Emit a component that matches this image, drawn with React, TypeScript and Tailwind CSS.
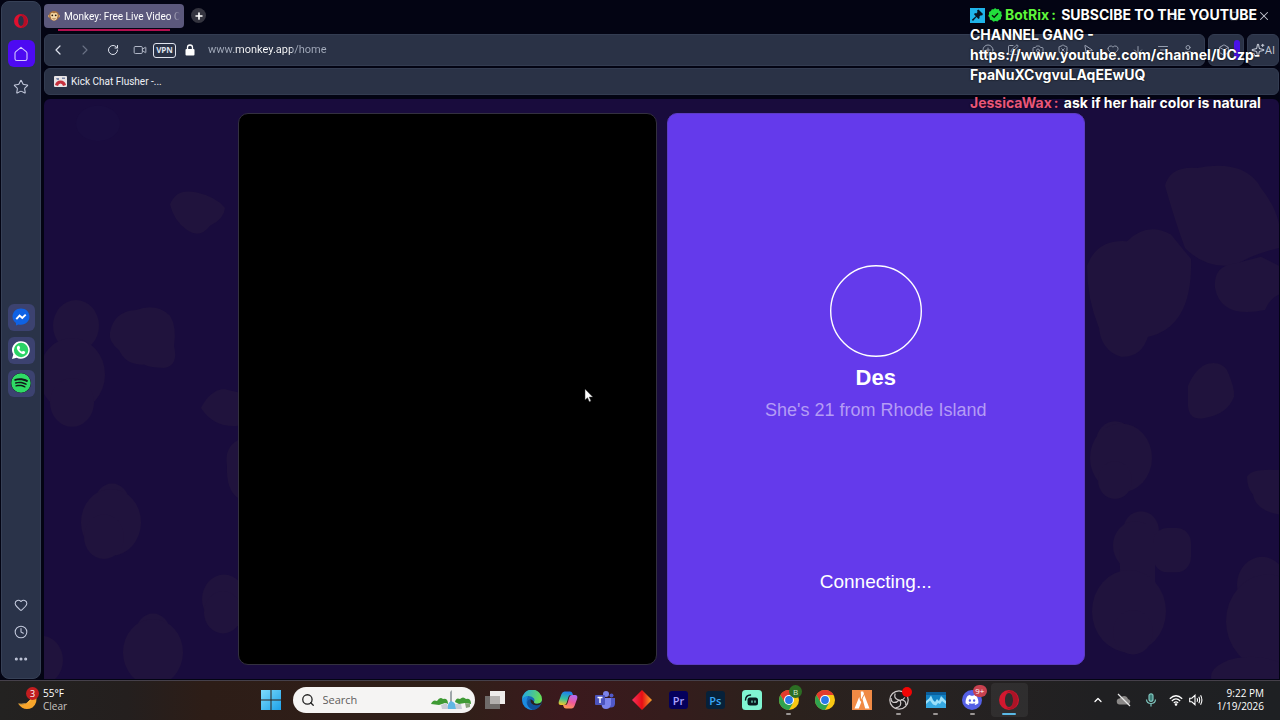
import { useState } from "react"
import type { ReactNode } from "react"
import {
  ArrowDown,
  Box,
  Camera,
  ChevronLeft,
  ChevronRight,
  ChevronUp,
  CirclePlus,
  Clock,
  Ellipsis,
  Heart,
  Minus,
  MousePointer2,
  Plus,
  RotateCw,
  Search,
  ShieldX,
  Sparkles,
  Square,
  SquarePen,
  Star,
  TextAlignCenter,
  User,
  Video,
  X,
} from "lucide-react"
import { FaDiscord, FaSpotify } from "react-icons/fa"

function OperaRing(props: { className: string }) {
  return (
    <svg viewBox="0 0 20 20" className={props.className} aria-hidden="true">
      <path fillRule="evenodd" fill="currentColor" d="M10 0a10 10 0 1 0 0 20a10 10 0 0 0 0-20zM10 3c2.600 0 4 3 4 7s-1.400 7-4 7s-4-3-4-7s1.400-7 4-7z" />
      <path fill="#7d0d1c" opacity=".45" d="M12 .5A10 10 0 0 1 12 19.500Q9 20 7 16.500Q9 18.500 11.500 17.500Q14 15 14 10T11.500 2.500Q9 1.500 7 3.500Q9 0 12 .5z" />
    </svg>
  )
}

function SideButton(props: { label: string; box?: string; short?: boolean; children: ReactNode }) {
  return (
    <div className={`flex items-center justify-center ${props.short ? "h-[27px]" : "h-[33px]"}`}>
      <button aria-label={props.label} className={`flex size-[27px] items-center justify-center rounded-md ${props.box ?? ""}`}>
        {props.children}
      </button>
    </div>
  )
}

function Sidebar() {
  return (
    <nav className="flex w-10 shrink-0 flex-col justify-between rounded-lg border border-[#364056] bg-[#2a3349] pt-0.5 pb-1.5 text-[#c3c9dc]">
      <div>
        <SideButton label="Opera menu">
          <OperaRing className="size-3.5 text-[#e0102f]" />
        </SideButton>
        <SideButton label="Home" box="bg-[#4d0af2]">
          <svg viewBox="0 0 16 16" className="size-4" fill="none" stroke="#d3c8ff" strokeWidth="1.100" strokeLinejoin="round">
            <path d="M8 1.300L13.200 5.600Q14 6.300 14 7.300V12.700Q14 14.500 12.200 14.500H3.800Q2 14.500 2 12.700V7.300Q2 6.300 2.800 5.600Z" />
          </svg>
        </SideButton>
        <SideButton label="Speed dial">
          <Star className="size-4" strokeWidth={1.6} />
        </SideButton>
      </div>
      <div className="pt-1.5">
        <SideButton label="Messenger" box="bg-[#3c4270]">
          <svg viewBox="0 0 20 20" className="size-5">
            <path fill="#0f62e4" d="M10 1.500c4.900 0 8.500 3.500 8.500 8.100s-3.600 8.100-8.500 8.100c-.9 0-1.700-.1-2.500-.3L5 18.500v-2.400C2.900 14.600 1.500 12.300 1.500 9.600C1.500 5 5.100 1.500 10 1.500z" />
            <path fill="none" stroke="#fff" strokeWidth="1.900" d="M5.300 12.200L8.600 8.500L11.300 10.900L14.700 7.600" />
          </svg>
        </SideButton>
        <SideButton label="WhatsApp" box="bg-[#3c4270]">
          <svg viewBox="0 0 20 20" className="size-5">
            <path fill="#fff" d="M10 1.200a8.800 8.800 0 1 1-4.300 16.500L1 19l1.300-4.500A8.800 8.800 0 0 1 10 1.200z" />
            <circle cx="10.100" cy="10" r="7.200" fill="#2bd366" />
            <path fill="#fff" d="M7 5.700l1.200.1l1 2.200l-.9 1.200q.9 1.800 2.700 2.600l1-1.100l2.300 1.100q.1 2.300-2.300 2.500Q9.500 14.200 7.200 11Q4.600 7.600 7 5.700z" />
          </svg>
        </SideButton>
        <SideButton label="Spotify" box="bg-[#3c4270]">
          <FaSpotify className="size-5 rounded-full bg-[#101a18] text-[#2fdb66]" />
        </SideButton>
      </div>
      <div>
        <SideButton label="Pinboards" short>
          <Heart className="size-3.5" strokeWidth={1.8} />
        </SideButton>
        <SideButton label="History" short>
          <Clock className="size-3.5" strokeWidth={1.8} />
        </SideButton>
        <SideButton label="More" short>
          <Ellipsis className="size-4" strokeWidth={2.6} />
        </SideButton>
      </div>
    </nav>
  )
}

function MonkeyFace() {
  return (
    <svg viewBox="0 0 12 12" className="size-3 shrink-0" aria-hidden="true">
      <circle cx="1.600" cy="6" r="1.600" fill="#d9a566" />
      <circle cx="10.400" cy="6" r="1.600" fill="#d9a566" />
      <circle cx="6" cy="5.800" r="4.900" fill="#a9713b" />
      <path fill="#f5d9a6" d="M6 3.400Q8 1.900 9.400 4Q10.200 6 9 7.500Q9 10.300 6 10.400Q3 10.300 3 7.500Q1.800 6 2.600 4Q4 1.900 6 3.400z" />
      <circle cx="4.300" cy="5.300" r=".9" fill="#2c1a10" />
      <circle cx="7.700" cy="5.300" r=".9" fill="#2c1a10" />
      <path d="M4.500 8.500Q6 9.600 7.500 8.500" stroke="#7a4526" strokeWidth=".7" fill="none" />
    </svg>
  )
}

function TabStrip() {
  return (
    <header className="flex h-[30px] items-start justify-between">
      <div className="flex items-start gap-[7px]">
        <div className="w-[140px]" role="tablist">
          <button role="tab" aria-selected="true" className="flex h-6 w-full items-center gap-1 rounded bg-[#5b587c] px-1 font-['Roboto',sans-serif] text-[10px] text-white">
            <MonkeyFace />
            <span className="whitespace-nowrap [mask-image:linear-gradient(90deg,#000_90%,transparent)]">Monkey: Free Live Video C</span>
          </button>
          <div className="mx-3.5 mt-px h-0.5 bg-[#b3104f]" />
        </div>
        <button aria-label="New tab" className="mt-1 flex size-[15px] items-center justify-center rounded-full bg-[#34343f] text-white">
          <Plus className="size-2.5" strokeWidth={4} />
        </button>
      </div>
      <div className="flex h-6 items-center text-[#8b8fa0]">
        <button aria-label="Search tabs" className="flex w-[30px] justify-center"><Search className="size-2.5" /></button>
        <button aria-label="Minimize" className="flex w-[30px] justify-center"><Minus className="size-3" strokeWidth={1.5} /></button>
        <button aria-label="Maximize" className="flex w-[30px] justify-center"><Square className="size-2.5" strokeWidth={2} /></button>
        <button aria-label="Close" className="flex w-[30px] justify-center text-[#c2c5cf]"><X className="size-3.5" strokeWidth={1.8} /></button>
      </div>
    </header>
  )
}

const TOOLS = [
  { label: "Zoom", Icon: CirclePlus },
  { label: "Edit page", Icon: SquarePen },
  { label: "Snapshot", Icon: Camera },
  { label: "Ad blocker", Icon: ShieldX },
  { label: "Send", Icon: MousePointer2 },
  { label: "Favourite", Icon: Heart },
  { label: "Downloads", Icon: ArrowDown },
  { label: "Easy setup", Icon: TextAlignCenter },
  { label: "Profile", Icon: User },
]

function AddressBar() {
  const [url, setUrl] = useState("www.monkey.app/home")

  return (
    <div className="mb-0.5 flex h-8 gap-[3px]">
      <div className="flex min-w-0 flex-1 items-center rounded-md border border-[#333c51] bg-[#2a3246] pr-1 text-[#dfe3ee]">
        <button aria-label="Back" className="flex w-[26px] justify-center"><ChevronLeft className="size-4" strokeWidth={1.8} /></button>
        <button aria-label="Forward" className="flex w-7 justify-center text-[#6b7386]"><ChevronRight className="size-4" strokeWidth={1.6} /></button>
        <button aria-label="Reload" className="flex w-[27px] justify-center"><RotateCw className="size-3" strokeWidth={2} /></button>
        <button aria-label="Camera access" className="flex w-[27px] justify-center text-[#b3b9c8]"><Video className="size-3.5" strokeWidth={1.7} /></button>
        <button className="flex h-[15px] w-[23px] items-center justify-center rounded-[3px] border border-[#dfe3ee] text-[8px] leading-none font-bold">VPN</button>
        <span className="flex w-7 justify-center">
          <svg viewBox="0 0 10 12" className="h-3 w-2.5" aria-hidden="true">
            <path d="M2.500 5.500V3.500a2.500 2.500 0 0 1 5 0v2" fill="none" stroke="#fff" strokeWidth="1.300" />
            <rect x=".5" y="5" width="9" height="6.500" rx="1" fill="#fff" />
          </svg>
        </span>
        <input
          aria-label="Address"
          value={url}
          onChange={(e) => setUrl(e.target.value)}
          className="ml-1 min-w-0 flex-1 bg-[linear-gradient(90deg,#a5adbd_26px,#fff_26px,#fff_84px,#a5adbd_84px)] bg-clip-text font-['Roboto',sans-serif] text-[11px] text-transparent caret-white outline-none"
        />
        <div className="flex text-[#a3aaba]">
          {TOOLS.map(({ label, Icon }) => (
            <button key={label} aria-label={label} className="flex w-[25px] justify-center">
              <Icon className={label === "Send" ? "size-3 rotate-12" : "size-3"} strokeWidth={1.8} />
            </button>
          ))}
        </div>
      </div>
      <button aria-label="Extensions" className="flex w-9 items-center justify-center gap-1 rounded-md border border-[#333c51] bg-[#2a3246] pl-1.5 text-[#a1a7b8]">
        <Box className="size-3" strokeWidth={2} />
        <span className="h-5 w-1.5 rounded-full bg-[#4a12e8]" />
      </button>
      <button className="flex w-8 items-center justify-center rounded-md border border-[#333c51] bg-[#2a3246] text-[11px] text-[#c3c8d4]">
        <Sparkles className="size-3.5 shrink-0" strokeWidth={1.8} />
        AI
      </button>
    </div>
  )
}

function BookmarksBar() {
  return (
    <div className="mb-1 flex h-[27px] items-center rounded-md border border-[#333c51] bg-[#2a3246] px-[9px]">
      <a href="#flusher" className="flex items-center gap-1 font-['Roboto',sans-serif] text-[10px] leading-4 text-[#eef0f6]">
        <svg viewBox="0 0 13 11" className="h-[11px] w-[13px]" aria-hidden="true">
          <rect width="13" height="11" rx="1" fill="#e9e4e6" />
          <path d="M1 9Q2 4.500 6.500 4.500T12 9L9 10Q8.500 7.500 6.500 7.500T4 10z" fill="#c5303d" />
          <path d="M2 2h3v2h-2zM8 1.500h3v1.500h-3z" fill="#7d88a8" />
        </svg>
        Kick Chat Flusher -...
      </a>
    </div>
  )
}

function Backdrop() {
  return (
    <>
      <svg viewBox="0 0 194 522" preserveAspectRatio="none" className="absolute top-0 left-0 h-[580px] w-[194px]" fill="#20133d" aria-hidden="true">
        <ellipse cx="54" cy="22" rx="22" ry="16" fill="#1a0e3f" />
        <path d="M126 95Q132 80 152 84T181 98Q180 108 166 114Q156 126 143 118T126 95z" />
        <circle cx="32" cy="204" r="23" />
        <circle cx="28" cy="248" r="33" />
        <circle cx="28" cy="273" r="22" />
        <path d="M66 210Q70 191 92 190Q112 183 126 195Q133 205 130 222Q135 240 120 242Q106 242 100 239Q82 240 75 226Q64 218 66 210z" />
        <path d="M157 278Q166 262 180 261L194 264V294Q170 296 157 278z" />
        <path d="M194 307Q180 314 183 330Q182 352 194 359z" />
        <circle cx="68" cy="363" r="17" />
        <circle cx="67" cy="381" r="30" />
        <circle cx="60" cy="394" r="20" />
        <circle cx="180" cy="450" r="22" />
        <circle cx="179" cy="462" r="19" />
        <circle cx="109" cy="480" r="17" />
        <circle cx="109" cy="498" r="30" />
        <circle cx="-3" cy="505" r="22" />
      </svg>
      <svg viewBox="0 0 194 522" preserveAspectRatio="none" className="absolute top-0 right-0 h-[580px] w-[194px]" fill="#20133d" aria-hidden="true">
        <path d="M80 78Q85 60 112 62Q160 54 176 80Q190 96 194 112V134Q166 140 150 150Q120 153 100 134Q90 110 80 78z" />
        <path d="M2 150Q12 126 42 128Q62 110 86 122L106 144Q108 205 63 214Q56 233 36 232Q16 226 14 206Q2 180 2 150z" />
        <path d="M130 170Q128 150 150 148L176 142L194 150V176Q184 180 180 190Q136 198 130 170z" />
        <path d="M103 258Q112 240 124 238T142 244Q150 260 149 268Q142 284 120 287Q104 290 103 276z" />
        <circle cx="30" cy="309" r="19" />
        <circle cx="36" cy="323" r="31" />
        <circle cx="30" cy="343" r="17" />
        <path d="M162 340Q166 332 194 334V374Q170 370 168 356Q162 350 162 340z" />
        <circle cx="56" cy="389" r="18" />
        <circle cx="50" cy="402" r="22" />
        <rect x="68" y="386" width="38" height="40" rx="14" />
        <path d="M34 405H70V440H36z" />
        <circle cx="44" cy="461" r="37" />
        <circle cx="48" cy="480" r="20" />
        <circle cx="177" cy="437" r="25" />
        <circle cx="183" cy="470" r="42" />
        <ellipse cx="166" cy="520" rx="40" ry="18" />
      </svg>
    </>
  )
}

function MatchCard(props: { name: string; intro: string }) {
  return (
    <section className="flex flex-col items-center justify-between rounded-[10px] border border-[#5c3cc4] bg-[#643aeb] px-4 pt-[151px] pb-[68px] text-center font-['Liberation_Sans',Arial,sans-serif]">
      <div className="flex flex-col items-center">
        <svg viewBox="0 0 92 92" className="size-[92px]" fill="none" aria-hidden="true">
          <circle cx="46" cy="46" r="45.300" stroke="#fff" strokeWidth="1.400" />
        </svg>
        <h1 className="mt-[7px] text-[22px] leading-7 font-bold text-white">{props.name}</h1>
        <p className="mt-1 text-[18px] leading-7 text-[#b49cf5]">{props.intro}</p>
      </div>
      <p className="text-[19px] leading-7 text-white">Connecting...</p>
    </section>
  )
}

function VideoPage() {
  return (
    <main className="relative flex flex-1 justify-center overflow-hidden rounded-t-md bg-[#190c3d] px-4 py-3.5">
      <Backdrop />
      <div className="relative grid w-full max-w-[847px] grid-cols-2 gap-2.5">
        <section aria-label="Your camera" className="rounded-[10px] border border-[#33303f] bg-black" />
        <MatchCard name="Des" intro="She's 21 from Rhode Island" />
        <svg viewBox="0 0 10 15" className="absolute top-[275px] left-[346px] h-[15px] w-2.5" aria-hidden="true">
          <path d="M1 1V12L3.500 9.700L5.300 13.800L7 13L5.200 9.100H8.800z" fill="#fff" stroke="#333" strokeWidth=".5" />
        </svg>
      </div>
    </main>
  )
}

function ChatOverlay() {
  return (
    <aside className="pointer-events-none absolute top-[5px] right-2.5 w-[300px] font-['Inter',sans-serif] text-[14px] leading-5 font-bold text-white [text-shadow:0_0_2px_#000]">
      <p className="mb-2">
        <svg viewBox="0 0 15 15" className="mr-[3px] inline-block size-[15px] align-[-3px]" aria-hidden="true">
          <rect width="15" height="15" fill="#1fb4ea" />
          <path d="M7 2.500L8.500 1.500L13 6L12 7.500L10.800 7.200L9.300 8.700L9.700 10L8.500 11L6.500 9L3 13L1.800 11.800L5.800 8.200L4 6.200L5 5L6.300 5.400L7.500 4z" fill="#0a1320" />
        </svg>
        <svg viewBox="0 0 14 14" className="mr-[3px] inline-block size-3.5 align-[-2px]" aria-hidden="true">
          <path d="M7 0l1.700 1.200L10.800 1l.8 1.900l1.900.9l-.2 2.100L14.200 7.500l-1.100 1.700l-.2 2.100l-2 .7l-1.400 1.600L7.400 13l-2 .7l-1.500-1.500l-2-.5l-.3-2.100L.2 8l.9-1.900L1 4l1.900-.9l.9-1.900l2.100.1z" fill="#22dd3c" />
          <path d="M4 7.200L6.200 9.300L10 5.200" fill="none" stroke="#07150a" strokeWidth="1.500" />
        </svg>
        <span className="mr-0.5 text-[#5df53c]">BotRix</span>
        <span className="mr-0.5 text-[#5df53c]">:</span> SUBSCIBE TO THE YOUTUBE CHANNEL GANG - https://www.youtube.com/channel/UCzp-FpaNuXCvgvuLAqEEwUQ
      </p>
      <p>
        <span className="mr-0.5 text-[#e9567b]">JessicaWax</span>
        <span className="mr-0.5 text-[#e9567b]">:</span> ask if her hair color is natural
      </p>
    </aside>
  )
}

function ChromeLogo() {
  return (
    <svg viewBox="0 0 20 20" className="size-5">
      <circle cx="10" cy="10" r="10" fill="#f9c713" />
      <path d="M10 5H18.660A10 10 0 0 0 1.340 5L5.700 12.500z" fill="#e23b2e" />
      <path d="M1.340 5A10 10 0 0 0 10 20L14.300 12.500H5.700z" fill="#2fa350" />
      <circle cx="10" cy="10" r="5" fill="#fff" />
      <circle cx="10" cy="10" r="3.900" fill="#2a78ea" />
    </svg>
  )
}

function TaskIcon(props: { label: string; running?: boolean; active?: boolean; badge?: ReactNode; children: ReactNode }) {
  const { label, running, active, badge, children } = props

  return (
    <button aria-label={label} className="relative flex h-[34px] flex-1 items-center justify-center">
      {active && <span className="absolute inset-0 rounded bg-white/6" />}
      <span className="relative flex size-5 items-center justify-center">{children}</span>
      {badge}
      {running && <span className="absolute inset-x-0 bottom-0.5 mx-auto h-0.5 w-[5px] rounded-full bg-[#9b9694]" />}
      {active && <span className="absolute inset-x-0 bottom-0.5 mx-auto h-0.5 w-3.5 rounded-full bg-[#5ab9e6]" />}
    </button>
  )
}

function AppIcons() {
  return (
    <div className="flex w-[551px]">
      <TaskIcon label="Task view">
        <svg viewBox="0 0 20 20" className="size-5">
          <rect x="5" y="1" width="15" height="13" fill="#eeeceb" />
          <rect x="0" y="6" width="15" height="13" fill="#6f6b69" />
          <rect x="5" y="6" width="10" height="8" fill="#b3b0ae" />
        </svg>
      </TaskIcon>
      <TaskIcon label="Edge">
        <svg viewBox="0 0 20 20" className="size-5">
          <defs>
            <linearGradient id="edge-top" x1="0" y1=".3" x2="1" y2=".5">
              <stop offset="0" stopColor="#22a6e6" />
              <stop offset="1" stopColor="#6be04e" />
            </linearGradient>
          </defs>
          <circle cx="10" cy="10" r="10" fill="#1568b8" />
          <path d="M0 9.500A10 10 0 0 1 20 9.500Q19.800 13.500 15.500 13.800Q11.500 13.800 12 11.800Q13 10.500 12 8.500Q10 5.700 6 6Q2 6.500 0 9.500z" fill="url(#edge-top)" />
          <path d="M0 9.500Q2 6.300 6.200 6.200Q4 9 4.500 13Q6 18 11 20Q1 20 0 9.500z" fill="#1c8be0" />
          <path d="M8.200 9Q7 15.500 18.500 14.500Q15.500 19.800 11 20Q4 17 5.500 11.500Q6.500 9.300 8.200 9z" fill="#11509a" />
          <path d="M8.400 9.200Q8 14.800 14 15.200Q17 15.300 18.700 14.300Q19.500 13 20 11Q18.500 13.800 15.500 13.800Q11.500 13.800 12 11.800Q10 9 8.400 9.200z" fill="#2a2020" />
        </svg>
      </TaskIcon>
      <TaskIcon label="Copilot">
        <svg viewBox="0 0 20 20" className="size-5">
          <defs>
            <linearGradient id="cp-left" x1=".5" y1="0" x2=".3" y2="1">
              <stop offset="0" stopColor="#1d7df0" />
              <stop offset=".55" stopColor="#36c19c" />
              <stop offset="1" stopColor="#f3c927" />
            </linearGradient>
            <linearGradient id="cp-right" x1=".7" y1="0" x2=".3" y2="1">
              <stop offset="0" stopColor="#b36af2" />
              <stop offset=".5" stopColor="#f0599a" />
              <stop offset="1" stopColor="#ff9a52" />
            </linearGradient>
          </defs>
          <path d="M6.500 1.500H12Q14 1.500 14.500 3.500L15 5H12.500Q11 5 10.400 7L8.600 13Q8 15 6 15H3Q0 15 .8 11.500L3.500 4Q4.500 1.500 6.500 1.500z" fill="url(#cp-left)" />
          <path d="M13.500 18.500H8Q6 18.500 5.500 16.500L5 15H7.500Q9 15 9.600 13L11.400 7Q12 5 14 5H17Q20 5 19.200 8.500L16.500 16Q15.500 18.500 13.500 18.500z" fill="url(#cp-right)" />
        </svg>
      </TaskIcon>
      <TaskIcon label="Teams">
        <svg viewBox="0 0 20 20" className="size-5">
          <circle cx="16.500" cy="5.500" r="2" fill="#5059c9" />
          <circle cx="11" cy="4" r="3" fill="#7b83eb" />
          <path d="M13 8h7v6q-.5 3.500-4 3.500h-3z" fill="#5059c9" />
          <path d="M7 8h9v6.500Q15 19 11 19T6.500 14.500z" fill="#7b83eb" />
          <rect x="0" y="5" width="10" height="10" rx="1" fill="#4b53bc" />
          <path d="M2.500 7.500h5M5 7.500v5.500" stroke="#fff" strokeWidth="1.400" />
        </svg>
      </TaskIcon>
      <TaskIcon label="Media">
        <svg viewBox="0 0 20 20" className="size-5">
          <defs>
            <linearGradient id="gem">
              <stop offset="0" stopColor="#f5325f" />
              <stop offset=".5" stopColor="#e60d14" />
              <stop offset="1" stopColor="#f5a52a" />
            </linearGradient>
          </defs>
          <path d="M10 0L20 10L10 20L0 10z" fill="url(#gem)" />
        </svg>
      </TaskIcon>
      <TaskIcon label="Premiere Pro">
        <span className="flex h-[18px] w-[19px] items-center justify-center rounded-[3px] bg-[#04005c] text-[11px] leading-none font-semibold text-[#a9a2ff]">Pr</span>
      </TaskIcon>
      <TaskIcon label="Photoshop">
        <span className="flex h-[18px] w-[19px] items-center justify-center rounded-[3px] bg-[#06213a] text-[11px] leading-none font-semibold text-[#3ba7f7]">Ps</span>
      </TaskIcon>
      <TaskIcon label="Streamlabs">
        <svg viewBox="0 0 20 20" className="size-5">
          <rect width="20" height="20" rx="3.500" fill="#80f5d2" />
          <rect x="5.500" y="7.500" width="10.500" height="8" rx="2.500" fill="#091a1e" />
          <path d="M3.500 10Q3.700 5.300 8.500 5" fill="none" stroke="#091a1e" strokeWidth="1.400" strokeLinecap="round" />
          <path d="M10 10.500v2.200M13 10.500v2.200" stroke="#80f5d2" strokeWidth="1.200" />
        </svg>
      </TaskIcon>
      <TaskIcon
        label="Chrome, profile B"
        running
        badge={<span className="absolute top-0.5 right-[5px] flex size-[13px] items-center justify-center rounded-full bg-[#2c6e24] text-[8px] leading-none text-[#d5ead0]">B</span>}
      >
        <ChromeLogo />
      </TaskIcon>
      <TaskIcon label="Chrome">
        <ChromeLogo />
      </TaskIcon>
      <TaskIcon label="FiveM">
        <svg viewBox="0 0 20 20" className="size-5">
          <rect width="20" height="20" fill="#f08a45" />
          <path d="M8.800 1.500h2.400L12 4L9 9.500zM12.300 5L17.500 18.500H13.200L10.500 9zM8 10.500L9.300 12L6.800 18.500H2.500L7.200 7z" fill="#fff" />
        </svg>
      </TaskIcon>
      <TaskIcon label="OBS Studio" running badge={<span className="absolute top-1 right-[5px] size-2.5 rounded-full bg-[#f20505]" />}>
        <svg viewBox="0 0 20 20" className="size-5" fill="none" stroke="#cfcaca" strokeWidth="1.200">
          <circle cx="10" cy="10" r="9.200" fill="#1f1c1d" />
          <path d="M6.200 3.500Q4.500 8.500 9.500 10Q13 11.500 15.800 7.500" />
          <path d="M9.800 10Q12.800 11.500 11.200 15.500Q9.500 18 6.500 17.500" />
          <path d="M10 10Q7 13.500 3.500 12Q1.800 10.500 2 8" />
          <path d="M12 9.500Q17.500 10.500 16.800 15" />
        </svg>
      </TaskIcon>
      <TaskIcon label="Task Manager" running>
        <svg viewBox="0 0 20 16" className="h-4 w-5">
          <rect width="20" height="16" fill="#1181c4" />
          <rect width="20" height="3" fill="#0b5f9c" />
          <path d="M0 16V9L3 6.500L5 3.500L7 8L9 10L11 7L13 9L15 4L17 6L20 9V16z" fill="#9be0fa" />
          <path d="M0 16V12L4 8.500L7 12.500L10 13.500L12 11L14 12L16 9L20 12V16z" fill="#36a9e2" />
        </svg>
      </TaskIcon>
      <TaskIcon
        label="Discord"
        running
        badge={<span className="absolute top-0.5 right-1 flex h-3 w-3.5 items-center justify-center rounded-full bg-[#c8414f] text-[8px] leading-none text-white">9+</span>}
      >
        <span className="flex size-5 items-center justify-center rounded-full bg-[#5560e6] text-white">
          <FaDiscord className="size-3.5" />
        </span>
      </TaskIcon>
      <TaskIcon label="Opera" active>
        <OperaRing className="size-5 text-[#d3182f]" />
      </TaskIcon>
    </div>
  )
}

function Taskbar() {
  return (
    <footer className="grid h-10 grid-cols-[1fr_auto_1fr] items-center border-t border-[#45404a] bg-[linear-gradient(90deg,#232221_0%,#241f1e_10%,#2d1d17_16%,#2f1e18_26%,#2f2018_35%,#3b191d_44%,#351c1c_52%,#2c211c_60%,#272221_72%,#202022_86%,#1e2023_100%)] pb-px">
      <button className="relative flex items-center gap-1 justify-self-start pl-[17px] text-left text-[10px] text-white">
        <svg viewBox="0 0 22 26" className="h-[26px] w-[22px]" aria-hidden="true">
          <path d="M1 16.500Q8 20 14.500 11Q17 8 19 9Q21 16 15.500 20.500Q7 25 1 16.500z" fill="#f7a52b" />
          <path d="M1 16.500Q8 20 14.500 11Q14 17.500 1 16.500z" fill="#ffc964" />
        </svg>
        <span className="absolute top-0 left-[26px] flex size-[13px] items-center justify-center rounded-full bg-[#c21d1f] text-[9px] leading-none">3</span>
        <span className="block leading-[13px]">
          <span className="block">55°F</span>
          <span className="block text-[#c9c4c2]">Clear</span>
        </span>
      </button>

      <div className="flex items-center">
        <button aria-label="Start" className="flex h-9 w-9 items-center justify-center">
          <svg viewBox="0 0 20 20" className="size-5">
            <defs>
              <linearGradient id="win" x1="0" y1="0" x2="1" y2="1">
                <stop offset="0" stopColor="#7fdcfb" />
                <stop offset="1" stopColor="#1ca0ea" />
              </linearGradient>
            </defs>
            <path d="M0 0h9.500v9.500H0zM10.500 0H20v9.500h-9.500zM0 10.500h9.500V20H0zM10.500 10.500H20V20h-9.500z" fill="url(#win)" />
          </svg>
        </button>
        <label className="mr-0.5 ml-1 flex h-[26px] w-[182px] items-center rounded-full bg-[#f5f4f3] pr-[3px] pl-2">
          <Search className="size-3.5 shrink-0 text-[#222]" strokeWidth={2.2} />
          <input aria-label="Search" placeholder="Search" className="ml-2 min-w-0 flex-1 bg-transparent text-[11px] text-[#333] outline-none placeholder:text-[#5f5d5c]" />
          <svg viewBox="0 0 41 20" className="h-5 w-[41px] shrink-0" aria-hidden="true">
            <path d="M0 14Q2 9 6 11Q9 6 12 9Q17 8 17 14L14 13L8 15z" fill="#3f9a34" />
            <path d="M24 12Q25 7 29 9Q32 6 35 9Q40 8 40 14L34 13L28 14z" fill="#3f9a34" />
            <path d="M19 2L21 0V12H19z" fill="#9fa6aa" />
            <path d="M16 19Q17 12 20 11Q25 12 25 19z" fill="#60b7e4" />
            <path d="M10 15L16 13L17 19H11zM24 14L30 14L31 19H25z" fill="#c9ccd6" />
            <path d="M34 13l5 1v3l-4 1z" fill="#8aa27d" />
          </svg>
        </label>
        <AppIcons />
      </div>

      <div className="flex items-center justify-self-end pr-4 text-white">
        <button aria-label="Show hidden icons" className="flex w-[26px] justify-center"><ChevronUp className="size-3" strokeWidth={2.6} /></button>
        <button aria-label="OneDrive" className="flex w-[27px] justify-center">
          <svg viewBox="0 0 16 14" className="h-3.5 w-4">
            <path d="M4 11.500a3 3 0 0 1-.5-6Q5 3 8 3T12 6a2.800 2.800 0 0 1 0 5.500z" fill="#8b8988" />
            <path d="M2 1L14 13" stroke="#e9e9e9" strokeWidth="1.200" />
          </svg>
        </button>
        <button aria-label="Microphone in use" className="flex w-[27px] justify-center">
          <svg viewBox="0 0 12 14" className="h-3.5 w-3" fill="none" stroke="#7fc4bd" strokeWidth="1.200">
            <rect x="4" y=".8" width="4" height="7.500" rx="2" fill="#3d7f79" />
            <path d="M1.500 6.500Q1.700 10.500 6 10.500T10.500 6.500M6 10.500V13.500" />
          </svg>
        </button>
        <button aria-label="Network and volume" className="flex gap-1.5 pr-3.5 pl-1">
          <svg viewBox="0 0 14 12" className="h-3 w-3.5" fill="none" stroke="#fff" strokeWidth="1.200">
            <path d="M.8 4.800Q7-1.300 13.200 4.800M2.800 7Q7 2.800 11.200 7M4.800 9Q7 6.800 9.200 9" />
            <circle cx="7" cy="10.500" r=".7" fill="#fff" />
          </svg>
          <svg viewBox="0 0 14 12" className="h-3 w-3.5" fill="none" stroke="#fff" strokeWidth="1.100">
            <path d="M.7 4.200H2.800L6 1.300V10.700L2.800 7.800H.7z" />
            <path d="M8 4.300Q9 6 8 7.700M9.800 2.800Q11.500 6 9.800 9.200M11.600 1.300Q14.200 6 11.600 10.700" />
          </svg>
        </button>
        <button className="text-right text-[10px] leading-[13px]">
          <span className="block">9:22 PM</span>
          <span className="block">1/19/2026</span>
        </button>
      </div>
    </footer>
  )
}

export default function App() {
  return (
    <div className="relative flex min-h-screen flex-col bg-[#030413] font-['Open_Sans','Noto_Sans',sans-serif]">
      <div className="flex flex-1 gap-[3px] py-px pl-px">
        <Sidebar />
        <div className="flex min-w-0 flex-1 flex-col pt-[3px] pr-px">
          <TabStrip />
          <AddressBar />
          <BookmarksBar />
          <VideoPage />
        </div>
      </div>
      <Taskbar />
      <ChatOverlay />
    </div>
  )
}
